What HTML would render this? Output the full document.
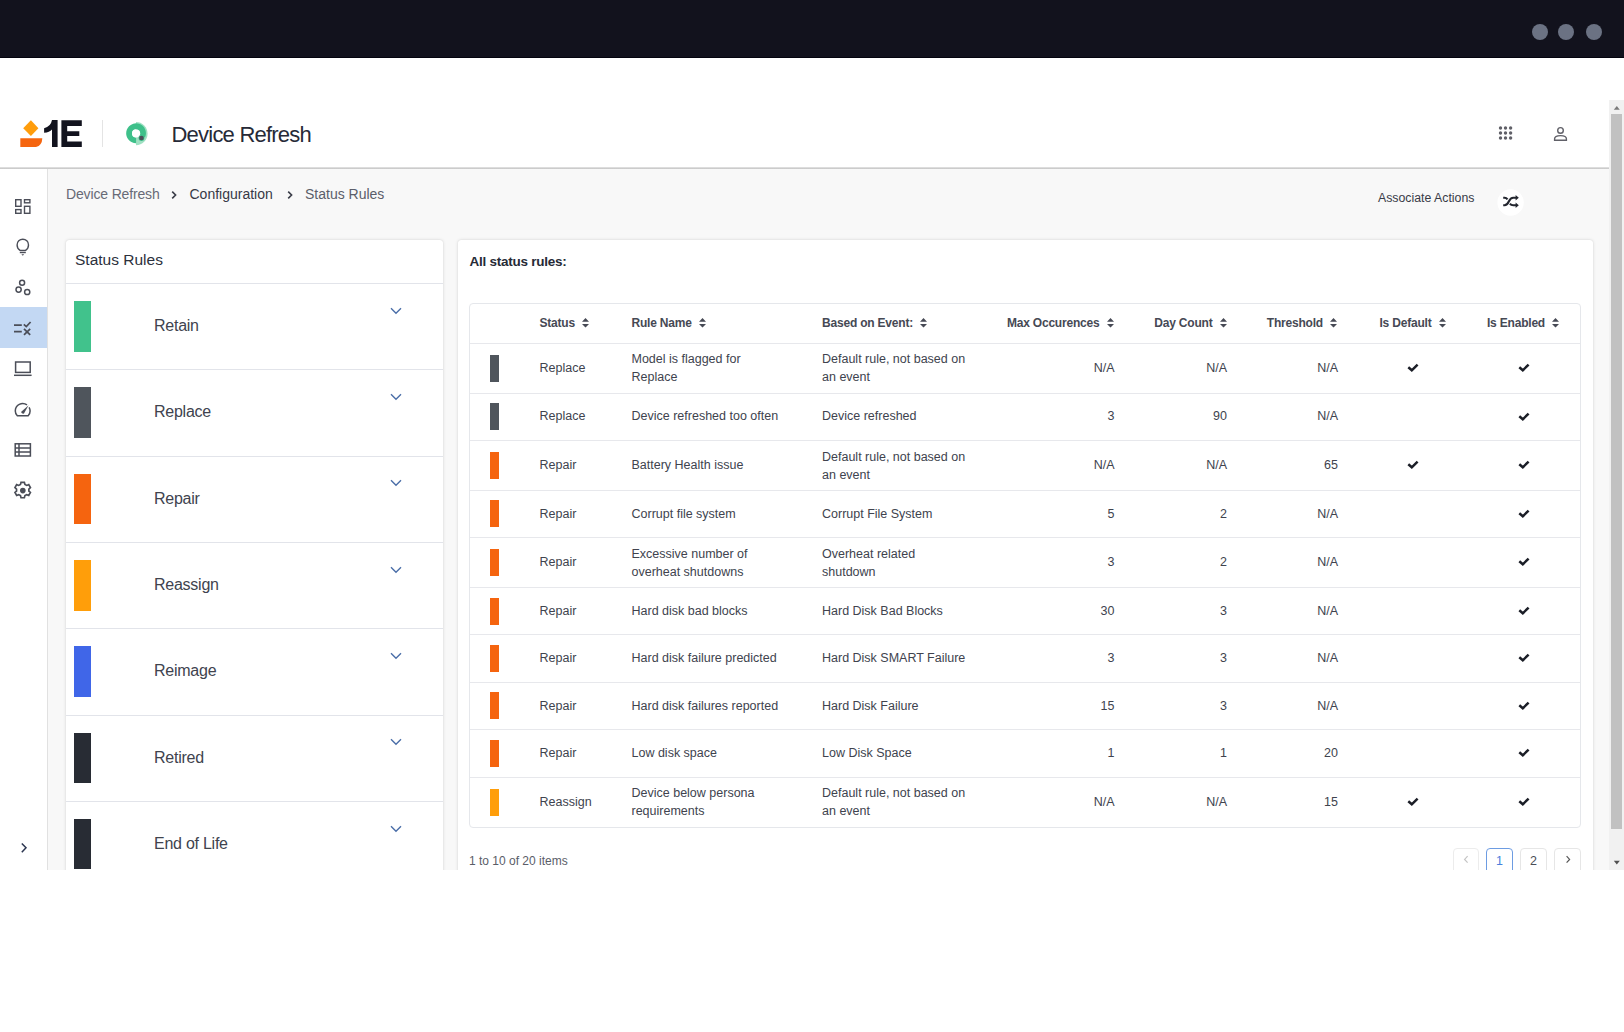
<!DOCTYPE html>
<html><head><meta charset="utf-8">
<style>
*{box-sizing:border-box;margin:0;padding:0}
html,body{width:1624px;height:1032px;overflow:hidden;background:#fff;font-family:"Liberation Sans",sans-serif;color:#2f3340}
.abs{position:absolute}
#topbar{left:0;top:0;width:1624px;height:58px;background:#12121d;border-bottom:1px solid #03030e}
.dot{width:16px;height:16px;border-radius:50%;background:#6b7283;top:24px}
#hdrline{left:0;top:167px;width:1609px;height:2px;background:linear-gradient(#e6e6e6,#c3c3c3)}
#sidebar{left:0;top:169px;width:48px;height:701px;background:#fff;border-right:1px solid #e1e1e1}
#content{left:48px;top:169px;width:1561px;height:701px;background:#f8f8f8}
#sb{left:1609px;top:100px;width:15px;height:770px;background:#f1f1f1}
#thumb{left:1611px;top:114px;width:11px;height:715px;background:#c1c1c1}
.panel{background:#fff;border-radius:3px;box-shadow:0 0 1px rgba(0,0,0,.12),0 0 3.5px rgba(0,0,0,.13)}
.crumb{font-size:14px;top:186px;line-height:17px}
.item{left:65.5px;width:377.5px;height:86px;border-top:1.5px solid #e2e4ea}
.bar{left:8.8px;top:17.2px;width:17.2px;height:50.5px}
.ilabel{left:88.5px;top:33px;font-size:16px;letter-spacing:-0.25px;color:#40434e;line-height:18px}
.chev{left:324.5px;top:22.8px;width:12px;height:8px}
.th{top:315px;font-size:12px;font-weight:700;letter-spacing:-0.2px;color:#464954;line-height:14px;white-space:nowrap}
.row{left:470px;width:1110px;border-top:1px solid #e6e8ee}
.cell{font-size:12.5px;color:#40434e;line-height:18px;white-space:nowrap}
.sbar{width:9px;height:27px}
.pg{top:848.3px;width:26.3px;height:30px;border:1px solid #e6e6e6;border-radius:4px;background:#fff;font-size:12.5px;text-align:center;line-height:24.5px;color:#444}
</style></head><body>
<div id="topbar" class="abs"></div>
<div class="abs dot" style="left:1532px"></div>
<div class="abs dot" style="left:1558px"></div>
<div class="abs dot" style="left:1586px"></div>

<!-- header -->
<svg class="abs" style="left:15px;top:115px" width="75" height="37" viewBox="15 115 75 37">
  <path d="M30.9 120.3 L38.4 128.3 L30.9 136.1 L23.2 128.3Z" fill="#ff9d0c"/>
  <path d="M20.3 138.3 H42.3 Q42.1 145.5 36 147.1 H20.3Z" fill="#f5650f"/>
  <path d="M52 120.1 H57.6 V147 H52 V129.4 Q49.5 132.2 44.1 132.7 V128.2 Q50.8 126.8 52 120.1Z" fill="#12131e"/>
  <path d="M61.4 120.3 H81.8 V125.9 H67.2 V131.2 H79.3 V136.1 H67.2 V141.5 H81.8 V147 H61.4Z" fill="#12131e"/>
</svg>
<div class="abs" style="left:102px;top:120px;width:1px;height:27px;background:#e4e4e4"></div>
<svg class="abs" style="left:120px;top:116px" width="35" height="36" viewBox="120 116 35 36">
  <path d="M136 122 A11.3 11.3 0 0 1 136 145.2 Z" fill="#9fe0c2"/>
  <path d="M136.1 140.3 A7 7 0 1 1 142.4 136.3" fill="none" stroke="#3ec08a" stroke-width="5.8"/>
  <circle cx="136.1" cy="133.5" r="4.1" fill="#fff"/>
  <circle cx="141.5" cy="138" r="2.9" fill="#3ec08a"/>
  <circle cx="141.5" cy="138" r="2.3" fill="#4b4f58"/>
</svg>
<div class="abs" style="left:171.5px;top:122.1px;font-size:22px;letter-spacing:-0.78px;color:#262a37;line-height:26px">Device Refresh</div>
<svg class="abs" style="left:1497px;top:125px" width="17" height="17" viewBox="0 0 17 17">
 <g fill="#606068"><circle cx="3.5" cy="3" r="1.7"/><circle cx="8.5" cy="3" r="1.7"/><circle cx="13.6" cy="3" r="1.7"/>
 <circle cx="3.5" cy="8" r="1.7"/><circle cx="8.5" cy="8" r="1.7"/><circle cx="13.6" cy="8" r="1.7"/>
 <circle cx="3.5" cy="13" r="1.7"/><circle cx="8.5" cy="13" r="1.7"/><circle cx="13.6" cy="13" r="1.7"/></g>
</svg>
<svg class="abs" style="left:1552px;top:125px" width="17" height="17" viewBox="0 0 17 17">
 <g fill="none" stroke="#606068" stroke-width="1.4"><circle cx="8.5" cy="5.4" r="2.8"/><path d="M2.6 15.3 V13.8 Q2.6 10.6 8.5 10.6 Q14.4 10.6 14.4 13.8 V15.3Z"/></g>
</svg>
<div id="hdrline" class="abs"></div>

<div id="sidebar" class="abs"></div>
<div id="content" class="abs"></div>


<!-- sidebar icons -->
<div class="abs" style="left:0;top:307px;width:47px;height:41px;background:#c3d8f3"></div>
<svg class="abs" style="left:0;top:169px" width="47" height="701" viewBox="0 169 47 701">
 <g fill="none" stroke="#4b4e58" stroke-width="1.5">
  <!-- dashboard -->
  <rect x="15.7" y="199.7" width="5.3" height="6.6" stroke-width="1.4"/>
  <rect x="15.7" y="209.6" width="5.3" height="3.7" stroke-width="1.4"/>
  <rect x="24.5" y="199.7" width="5.4" height="3.1" stroke-width="1.4"/>
  <rect x="24.5" y="206.3" width="5.4" height="7" stroke-width="1.4"/>
  <!-- bulb -->
  <path d="M20 250.4 Q17.1 248.4 17.1 244.9 A5.7 5.7 0 0 1 28.5 244.9 Q28.5 248.4 25.6 250.4Z" stroke-width="1.4"/>
  <!-- circles -->
  <circle cx="22.1" cy="282.8" r="2.5"/>
  <circle cx="18.6" cy="289.6" r="2.6"/>
  <circle cx="27.2" cy="292" r="2.6"/>
  <!-- laptop -->
  <rect x="15.6" y="362" width="14.6" height="10.4"/>
  <path d="M14 375.3 H31.6"/>
  <!-- gauge -->
  <path d="M27 404.9 A7.4 7.4 0 0 0 15.3 411 Q15.3 413.8 17.3 415.7 H28.2 Q30.1 413.8 30.1 411 Q30.1 409 29.1 407.4"/>
  <!-- table -->
  <rect x="15.2" y="443.8" width="15.2" height="12.2"/>
  <path d="M15.2 447.9 H30.4 M15.2 451.9 H30.4 M19 443.8 V456"/>
 </g>
 <g fill="#4b4e58">
  <rect x="19.8" y="251.7" width="6" height="1.5"/>
  <path d="M21.4 254.2 H24.2 L22.8 255.8Z"/>
  <path d="M21 412 L28.6 405.2 L24 413.6 Q22 414.2 21 412Z"/>
 </g>
 <!-- active icon -->
 <g fill="none" stroke="#4b4e58" stroke-width="1.75" stroke-linecap="butt">
  <path d="M14 325 H21.8 M14 331.6 H21.8"/>
  <path d="M23.8 324.4 L26.3 326.6 L30.6 322"/>
  <path d="M24 328.9 L30.2 334.9 M30.2 328.9 L24 334.9"/>
 </g>
 <!-- gear -->
 <g transform="translate(22.7 490.6) scale(1.12)">
  <path fill="none" stroke="#4b4e58" stroke-width="1.5" d="M-1.5 -7.4 H1.5 L2 -5.5 L3.6 -4.6 L5.4 -5.3 L6.9 -2.7 L5.5 -1.4 V0.4 L6.9 1.7 L5.4 4.3 L3.6 3.6 L2 4.5 L1.5 6.4 H-1.5 L-2 4.5 L-3.6 3.6 L-5.4 4.3 L-6.9 1.7 L-5.5 0.4 V-1.4 L-6.9 -2.7 L-5.4 -5.3 L-3.6 -4.6 L-2 -5.5Z"/>
  <circle cx="0.1" cy="0" r="2.5" fill="#4b4e58"/>
 </g>
 <!-- expand chevron -->
 <path d="M21.8 843.4 L26 847.8 L21.8 852.2" fill="none" stroke="#2b3550" stroke-width="1.5"/>
</svg>


<div class="abs" style="left:0;top:0;width:1609px;height:870px;overflow:hidden">
 <div class="abs panel" style="left:65.5px;top:240px;width:377.5px;height:700px"></div>
 <div class="abs" style="left:75px;top:250.8px;font-size:15.5px;color:#2c303c;line-height:18px">Status Rules</div>
 <div class="abs item" style="top:283.0px">
  <div class="abs bar" style="background:#41c28c"></div>
  <div class="abs ilabel">Retain</div>
  <svg class="abs chev" viewBox="0 0 12 8"><path d="M1 1.3 L6 6.3 L11 1.3" fill="none" stroke="#4a6ea8" stroke-width="1.4"/></svg>
 </div>
 <div class="abs item" style="top:369.3px">
  <div class="abs bar" style="background:#4f555c"></div>
  <div class="abs ilabel">Replace</div>
  <svg class="abs chev" viewBox="0 0 12 8"><path d="M1 1.3 L6 6.3 L11 1.3" fill="none" stroke="#4a6ea8" stroke-width="1.4"/></svg>
 </div>
 <div class="abs item" style="top:455.6px">
  <div class="abs bar" style="background:#f5640f"></div>
  <div class="abs ilabel">Repair</div>
  <svg class="abs chev" viewBox="0 0 12 8"><path d="M1 1.3 L6 6.3 L11 1.3" fill="none" stroke="#4a6ea8" stroke-width="1.4"/></svg>
 </div>
 <div class="abs item" style="top:541.9px">
  <div class="abs bar" style="background:#ff9e0a"></div>
  <div class="abs ilabel">Reassign</div>
  <svg class="abs chev" viewBox="0 0 12 8"><path d="M1 1.3 L6 6.3 L11 1.3" fill="none" stroke="#4a6ea8" stroke-width="1.4"/></svg>
 </div>
 <div class="abs item" style="top:628.2px">
  <div class="abs bar" style="background:#4066e8"></div>
  <div class="abs ilabel">Reimage</div>
  <svg class="abs chev" viewBox="0 0 12 8"><path d="M1 1.3 L6 6.3 L11 1.3" fill="none" stroke="#4a6ea8" stroke-width="1.4"/></svg>
 </div>
 <div class="abs item" style="top:714.5px">
  <div class="abs bar" style="background:#282c34"></div>
  <div class="abs ilabel">Retired</div>
  <svg class="abs chev" viewBox="0 0 12 8"><path d="M1 1.3 L6 6.3 L11 1.3" fill="none" stroke="#4a6ea8" stroke-width="1.4"/></svg>
 </div>
 <div class="abs item" style="top:800.8px">
  <div class="abs bar" style="background:#282c34"></div>
  <div class="abs ilabel">End of Life</div>
  <svg class="abs chev" viewBox="0 0 12 8"><path d="M1 1.3 L6 6.3 L11 1.3" fill="none" stroke="#4a6ea8" stroke-width="1.4"/></svg>
 </div>

 <div class="abs panel" style="left:457.5px;top:240px;width:1135.5px;height:700px"></div>
 <div class="abs" style="left:469.5px;top:254px;font-size:13.5px;font-weight:700;letter-spacing:-0.25px;color:#262a36;line-height:16px">All status rules:</div>
 <div class="abs" style="left:469px;top:302.5px;width:1112px;height:525px;border:1px solid #e5e7eb;border-radius:4px"></div>
<!--TABLE-->
 <div class="abs th" style="left:539.5px;top:315.5px;display:flex;align-items:center">Status<svg width="7" height="10" viewBox="0 0 7 10" style="margin-left:7px;flex:none"><path d="M0 3.7 L3.5 0 L7 3.7Z M0 5.9 H7 L3.5 9.6Z" fill="#474a55"/></svg></div>
 <div class="abs th" style="left:631.5px;top:315.5px;display:flex;align-items:center">Rule Name<svg width="7" height="10" viewBox="0 0 7 10" style="margin-left:7px;flex:none"><path d="M0 3.7 L3.5 0 L7 3.7Z M0 5.9 H7 L3.5 9.6Z" fill="#474a55"/></svg></div>
 <div class="abs th" style="left:822px;top:315.5px;display:flex;align-items:center">Based on Event:<svg width="7" height="10" viewBox="0 0 7 10" style="margin-left:7px;flex:none"><path d="M0 3.7 L3.5 0 L7 3.7Z M0 5.9 H7 L3.5 9.6Z" fill="#474a55"/></svg></div>
 <div class="abs th" style="left:813.5px;width:300px;top:315.5px;display:flex;align-items:center;justify-content:flex-end">Max Occurences<svg width="7" height="10" viewBox="0 0 7 10" style="margin-left:7px;flex:none"><path d="M0 3.7 L3.5 0 L7 3.7Z M0 5.9 H7 L3.5 9.6Z" fill="#474a55"/></svg></div>
 <div class="abs th" style="left:926.5px;width:300px;top:315.5px;display:flex;align-items:center;justify-content:flex-end">Day Count<svg width="7" height="10" viewBox="0 0 7 10" style="margin-left:7px;flex:none"><path d="M0 3.7 L3.5 0 L7 3.7Z M0 5.9 H7 L3.5 9.6Z" fill="#474a55"/></svg></div>
 <div class="abs th" style="left:1037px;width:300px;top:315.5px;display:flex;align-items:center;justify-content:flex-end">Threshold<svg width="7" height="10" viewBox="0 0 7 10" style="margin-left:7px;flex:none"><path d="M0 3.7 L3.5 0 L7 3.7Z M0 5.9 H7 L3.5 9.6Z" fill="#474a55"/></svg></div>
 <div class="abs th" style="left:1262.5px;width:300px;top:315.5px;display:flex;align-items:center;justify-content:center">Is Default<svg width="7" height="10" viewBox="0 0 7 10" style="margin-left:7px;flex:none"><path d="M0 3.7 L3.5 0 L7 3.7Z M0 5.9 H7 L3.5 9.6Z" fill="#474a55"/></svg></div>
 <div class="abs th" style="left:1373px;width:300px;top:315.5px;display:flex;align-items:center;justify-content:center">Is Enabled<svg width="7" height="10" viewBox="0 0 7 10" style="margin-left:7px;flex:none"><path d="M0 3.7 L3.5 0 L7 3.7Z M0 5.9 H7 L3.5 9.6Z" fill="#474a55"/></svg></div>
 <div class="abs" style="left:470px;top:342.8px;width:1110px;height:1px;background:#e7e8ec"></div>
 <div class="abs sbar" style="left:490px;top:354.8px;background:#4f555c"></div>
 <div class="abs cell" style="left:539.5px;top:358.9px">Replace</div>
 <div class="abs cell" style="left:631.5px;top:350.4px">Model is flagged for<br>Replace</div>
 <div class="abs cell" style="left:822px;top:350.4px">Default rule, not based on<br>an event</div>
 <div class="abs cell" style="left:914.5px;width:200px;text-align:right;top:358.9px">N/A</div>
 <div class="abs cell" style="left:1027px;width:200px;text-align:right;top:358.9px">N/A</div>
 <div class="abs cell" style="left:1138px;width:200px;text-align:right;top:358.9px">N/A</div>
 <div class="abs" style="left:1407px;top:363.1px;width:12px;height:9px"><svg width="12" height="9" viewBox="0 0 12 9" style="display:block"><path d="M1.3 4.3 L4.8 7.3 L10.6 1.6" fill="none" stroke="#1b1e27" stroke-width="2.5"/></svg></div>
 <div class="abs" style="left:1517.5px;top:363.1px;width:12px;height:9px"><svg width="12" height="9" viewBox="0 0 12 9" style="display:block"><path d="M1.3 4.3 L4.8 7.3 L10.6 1.6" fill="none" stroke="#1b1e27" stroke-width="2.5"/></svg></div>
 <div class="abs" style="left:470px;top:392.7px;width:1110px;height:1px;background:#e7e8ec"></div>
 <div class="abs sbar" style="left:490px;top:403.3px;background:#4f555c"></div>
 <div class="abs cell" style="left:539.5px;top:407.4px">Replace</div>
 <div class="abs cell" style="left:631.5px;top:407.4px">Device refreshed too often</div>
 <div class="abs cell" style="left:822px;top:407.4px">Device refreshed</div>
 <div class="abs cell" style="left:914.5px;width:200px;text-align:right;top:407.4px">3</div>
 <div class="abs cell" style="left:1027px;width:200px;text-align:right;top:407.4px">90</div>
 <div class="abs cell" style="left:1138px;width:200px;text-align:right;top:407.4px">N/A</div>
 <div class="abs" style="left:1517.5px;top:411.7px;width:12px;height:9px"><svg width="12" height="9" viewBox="0 0 12 9" style="display:block"><path d="M1.3 4.3 L4.8 7.3 L10.6 1.6" fill="none" stroke="#1b1e27" stroke-width="2.5"/></svg></div>
 <div class="abs" style="left:470px;top:439.9px;width:1110px;height:1px;background:#e7e8ec"></div>
 <div class="abs sbar" style="left:490px;top:451.8px;background:#f5640f"></div>
 <div class="abs cell" style="left:539.5px;top:455.9px">Repair</div>
 <div class="abs cell" style="left:631.5px;top:455.9px">Battery Health issue</div>
 <div class="abs cell" style="left:822px;top:447.5px">Default rule, not based on<br>an event</div>
 <div class="abs cell" style="left:914.5px;width:200px;text-align:right;top:455.9px">N/A</div>
 <div class="abs cell" style="left:1027px;width:200px;text-align:right;top:455.9px">N/A</div>
 <div class="abs cell" style="left:1138px;width:200px;text-align:right;top:455.9px">65</div>
 <div class="abs" style="left:1407px;top:460.2px;width:12px;height:9px"><svg width="12" height="9" viewBox="0 0 12 9" style="display:block"><path d="M1.3 4.3 L4.8 7.3 L10.6 1.6" fill="none" stroke="#1b1e27" stroke-width="2.5"/></svg></div>
 <div class="abs" style="left:1517.5px;top:460.2px;width:12px;height:9px"><svg width="12" height="9" viewBox="0 0 12 9" style="display:block"><path d="M1.3 4.3 L4.8 7.3 L10.6 1.6" fill="none" stroke="#1b1e27" stroke-width="2.5"/></svg></div>
 <div class="abs" style="left:470px;top:489.7px;width:1110px;height:1px;background:#e7e8ec"></div>
 <div class="abs sbar" style="left:490px;top:500.4px;background:#f5640f"></div>
 <div class="abs cell" style="left:539.5px;top:504.5px">Repair</div>
 <div class="abs cell" style="left:631.5px;top:504.5px">Corrupt file system</div>
 <div class="abs cell" style="left:822px;top:504.5px">Corrupt File System</div>
 <div class="abs cell" style="left:914.5px;width:200px;text-align:right;top:504.5px">5</div>
 <div class="abs cell" style="left:1027px;width:200px;text-align:right;top:504.5px">2</div>
 <div class="abs cell" style="left:1138px;width:200px;text-align:right;top:504.5px">N/A</div>
 <div class="abs" style="left:1517.5px;top:508.8px;width:12px;height:9px"><svg width="12" height="9" viewBox="0 0 12 9" style="display:block"><path d="M1.3 4.3 L4.8 7.3 L10.6 1.6" fill="none" stroke="#1b1e27" stroke-width="2.5"/></svg></div>
 <div class="abs" style="left:470px;top:537.0px;width:1110px;height:1px;background:#e7e8ec"></div>
 <div class="abs sbar" style="left:490px;top:549.0px;background:#f5640f"></div>
 <div class="abs cell" style="left:539.5px;top:553.1px">Repair</div>
 <div class="abs cell" style="left:631.5px;top:544.8px">Excessive number of<br>overheat shutdowns</div>
 <div class="abs cell" style="left:822px;top:544.8px">Overheat related<br>shutdown</div>
 <div class="abs cell" style="left:914.5px;width:200px;text-align:right;top:553.1px">3</div>
 <div class="abs cell" style="left:1027px;width:200px;text-align:right;top:553.1px">2</div>
 <div class="abs cell" style="left:1138px;width:200px;text-align:right;top:553.1px">N/A</div>
 <div class="abs" style="left:1517.5px;top:557.4px;width:12px;height:9px"><svg width="12" height="9" viewBox="0 0 12 9" style="display:block"><path d="M1.3 4.3 L4.8 7.3 L10.6 1.6" fill="none" stroke="#1b1e27" stroke-width="2.5"/></svg></div>
 <div class="abs" style="left:470px;top:587.1px;width:1110px;height:1px;background:#e7e8ec"></div>
 <div class="abs sbar" style="left:490px;top:597.7px;background:#f5640f"></div>
 <div class="abs cell" style="left:539.5px;top:601.8px">Repair</div>
 <div class="abs cell" style="left:631.5px;top:601.8px">Hard disk bad blocks</div>
 <div class="abs cell" style="left:822px;top:601.8px">Hard Disk Bad Blocks</div>
 <div class="abs cell" style="left:914.5px;width:200px;text-align:right;top:601.8px">30</div>
 <div class="abs cell" style="left:1027px;width:200px;text-align:right;top:601.8px">3</div>
 <div class="abs cell" style="left:1138px;width:200px;text-align:right;top:601.8px">N/A</div>
 <div class="abs" style="left:1517.5px;top:606.1px;width:12px;height:9px"><svg width="12" height="9" viewBox="0 0 12 9" style="display:block"><path d="M1.3 4.3 L4.8 7.3 L10.6 1.6" fill="none" stroke="#1b1e27" stroke-width="2.5"/></svg></div>
 <div class="abs" style="left:470px;top:634.2px;width:1110px;height:1px;background:#e7e8ec"></div>
 <div class="abs sbar" style="left:490px;top:644.9px;background:#f5640f"></div>
 <div class="abs cell" style="left:539.5px;top:649.0px">Repair</div>
 <div class="abs cell" style="left:631.5px;top:649.0px">Hard disk failure predicted</div>
 <div class="abs cell" style="left:822px;top:649.0px">Hard Disk SMART Failure</div>
 <div class="abs cell" style="left:914.5px;width:200px;text-align:right;top:649.0px">3</div>
 <div class="abs cell" style="left:1027px;width:200px;text-align:right;top:649.0px">3</div>
 <div class="abs cell" style="left:1138px;width:200px;text-align:right;top:649.0px">N/A</div>
 <div class="abs" style="left:1517.5px;top:653.2px;width:12px;height:9px"><svg width="12" height="9" viewBox="0 0 12 9" style="display:block"><path d="M1.3 4.3 L4.8 7.3 L10.6 1.6" fill="none" stroke="#1b1e27" stroke-width="2.5"/></svg></div>
 <div class="abs" style="left:470px;top:681.5px;width:1110px;height:1px;background:#e7e8ec"></div>
 <div class="abs sbar" style="left:490px;top:692.4px;background:#f5640f"></div>
 <div class="abs cell" style="left:539.5px;top:696.5px">Repair</div>
 <div class="abs cell" style="left:631.5px;top:696.5px">Hard disk failures reported</div>
 <div class="abs cell" style="left:822px;top:696.5px">Hard Disk Failure</div>
 <div class="abs cell" style="left:914.5px;width:200px;text-align:right;top:696.5px">15</div>
 <div class="abs cell" style="left:1027px;width:200px;text-align:right;top:696.5px">3</div>
 <div class="abs cell" style="left:1138px;width:200px;text-align:right;top:696.5px">N/A</div>
 <div class="abs" style="left:1517.5px;top:700.8px;width:12px;height:9px"><svg width="12" height="9" viewBox="0 0 12 9" style="display:block"><path d="M1.3 4.3 L4.8 7.3 L10.6 1.6" fill="none" stroke="#1b1e27" stroke-width="2.5"/></svg></div>
 <div class="abs" style="left:470px;top:729.2px;width:1110px;height:1px;background:#e7e8ec"></div>
 <div class="abs sbar" style="left:490px;top:739.9px;background:#f5640f"></div>
 <div class="abs cell" style="left:539.5px;top:744.0px">Repair</div>
 <div class="abs cell" style="left:631.5px;top:744.0px">Low disk space</div>
 <div class="abs cell" style="left:822px;top:744.0px">Low Disk Space</div>
 <div class="abs cell" style="left:914.5px;width:200px;text-align:right;top:744.0px">1</div>
 <div class="abs cell" style="left:1027px;width:200px;text-align:right;top:744.0px">1</div>
 <div class="abs cell" style="left:1138px;width:200px;text-align:right;top:744.0px">20</div>
 <div class="abs" style="left:1517.5px;top:748.3px;width:12px;height:9px"><svg width="12" height="9" viewBox="0 0 12 9" style="display:block"><path d="M1.3 4.3 L4.8 7.3 L10.6 1.6" fill="none" stroke="#1b1e27" stroke-width="2.5"/></svg></div>
 <div class="abs" style="left:470px;top:776.6px;width:1110px;height:1px;background:#e7e8ec"></div>
 <div class="abs sbar" style="left:490px;top:788.5px;background:#ff9e0a"></div>
 <div class="abs cell" style="left:539.5px;top:792.6px">Reassign</div>
 <div class="abs cell" style="left:631.5px;top:784.2px">Device below persona<br>requirements</div>
 <div class="abs cell" style="left:822px;top:784.2px">Default rule, not based on<br>an event</div>
 <div class="abs cell" style="left:914.5px;width:200px;text-align:right;top:792.6px">N/A</div>
 <div class="abs cell" style="left:1027px;width:200px;text-align:right;top:792.6px">N/A</div>
 <div class="abs cell" style="left:1138px;width:200px;text-align:right;top:792.6px">15</div>
 <div class="abs" style="left:1407px;top:796.9px;width:12px;height:9px"><svg width="12" height="9" viewBox="0 0 12 9" style="display:block"><path d="M1.3 4.3 L4.8 7.3 L10.6 1.6" fill="none" stroke="#1b1e27" stroke-width="2.5"/></svg></div>
 <div class="abs" style="left:1517.5px;top:796.9px;width:12px;height:9px"><svg width="12" height="9" viewBox="0 0 12 9" style="display:block"><path d="M1.3 4.3 L4.8 7.3 L10.6 1.6" fill="none" stroke="#1b1e27" stroke-width="2.5"/></svg></div>
 <div class="abs cell" style="left:469px;top:851.5px;color:#5a5d68;font-size:12px">1 to 10 of 20 items</div>
 <div class="abs pg" style="left:1452.5px;color:#bbb;border-color:#ececec"><svg width="26" height="22" viewBox="0 0 26 22" style="display:block"><path d="M13.6 7.2 L10.6 10.4 L13.6 13.6" fill="none" stroke="#c4c4c4" stroke-width="1.2"/></svg></div>
 <div class="abs pg" style="left:1486.3px;color:#4a7fdc;border-color:#6d9ce2">1</div>
 <div class="abs pg" style="left:1520.3px;color:#4a4d57;border-color:#e6e6e6">2</div>
 <div class="abs pg" style="left:1554.3px;color:#555;border-color:#e6e6e6"><svg width="26" height="22" viewBox="0 0 26 22" style="display:block"><path d="M11.6 7.2 L14.6 10.4 L11.6 13.6" fill="none" stroke="#555" stroke-width="1.2"/></svg></div>
<!--/TABLE-->
</div>

<!-- breadcrumb -->
<div class="abs crumb" style="left:66px;color:#676a76;letter-spacing:-0.15px">Device Refresh</div>
<svg class="abs" style="left:170px;top:189px" width="9" height="12" viewBox="0 0 9 12"><path d="M2.2 2.6 L5.6 6 L2.2 9.4" fill="none" stroke="#3a3d48" stroke-width="1.6"/></svg>
<div class="abs crumb" style="left:189.5px;color:#363946">Configuration</div>
<svg class="abs" style="left:285.5px;top:189px" width="9" height="12" viewBox="0 0 9 12"><path d="M2.2 2.6 L5.6 6 L2.2 9.4" fill="none" stroke="#3a3d48" stroke-width="1.6"/></svg>
<div class="abs crumb" style="left:305px;color:#5b5e6a">Status Rules</div>

<!-- associate actions -->
<div class="abs" style="left:1378px;top:191px;font-size:12.3px;color:#383b47;line-height:15px">Associate Actions</div>
<svg class="abs" style="left:1495px;top:187px" width="32" height="32" viewBox="1495 187 32 32">
 <circle cx="1510.6" cy="202.5" r="13.2" fill="#fff"/>
 <g fill="none" stroke="#22252e" stroke-width="2.1">
  <path d="M1503.2 205.3 H1504.6 Q1507 205.3 1508.8 201.5 Q1510.6 197.7 1513.2 197.7 H1516.2"/>
  <path d="M1503.2 197.7 H1504.6 Q1506.3 197.7 1507.5 199.4"/>
  <path d="M1509.9 203.6 Q1511.1 205.3 1513.2 205.3 H1516.2"/>
 </g>
 <g fill="#22252e"><path d="M1515.6 195 L1518.8 197.7 L1515.6 200.4Z"/><path d="M1515.6 202.6 L1518.8 205.3 L1515.6 208Z"/></g>
</svg>

<div id="sb" class="abs"></div>
<div id="thumb" class="abs"></div>
<svg class="abs" style="left:1609px;top:100px" width="15" height="770" viewBox="1609 100 15 770">
 <path d="M1613.8 109.8 L1616.8 106 L1619.8 109.8Z" fill="#7b7b7b"/>
 <path d="M1613.8 860.8 L1619.8 860.8 L1616.8 864.6Z" fill="#505050"/>
</svg>

</body></html>
